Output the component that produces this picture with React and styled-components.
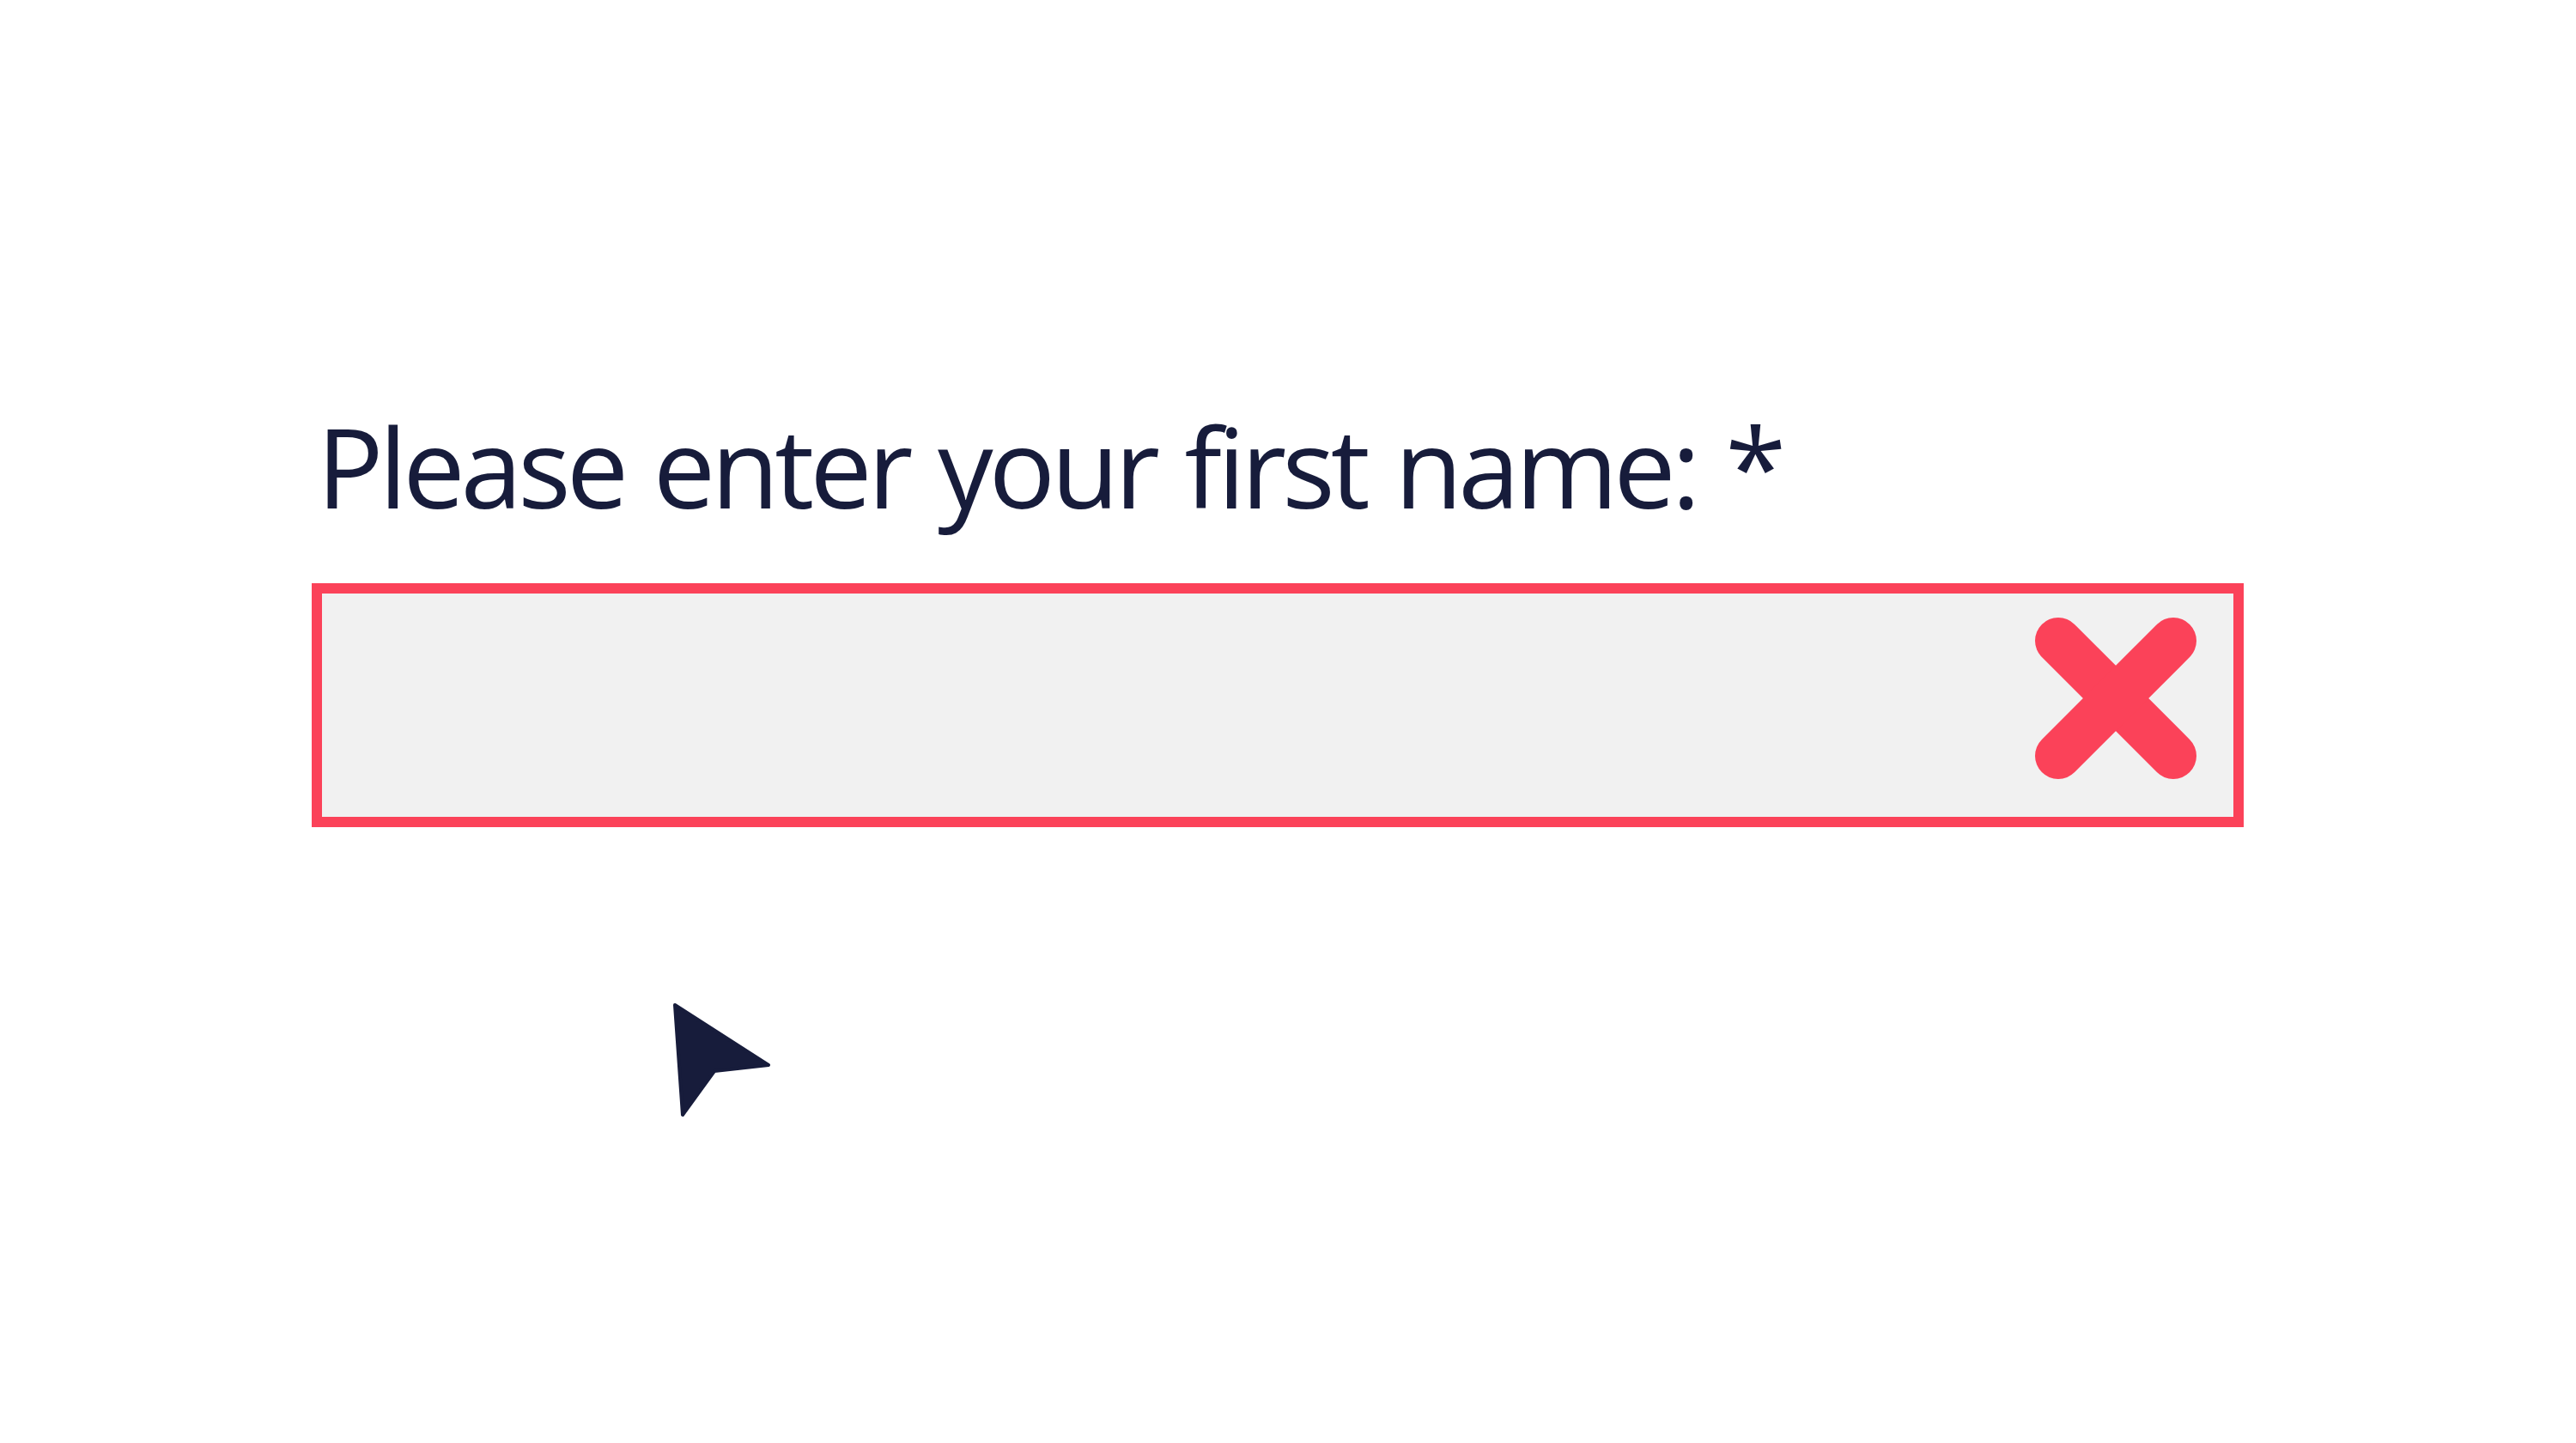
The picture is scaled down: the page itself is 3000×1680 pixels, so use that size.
import React from 'react';
import styled, { createGlobalStyle } from 'styled-components';

const GlobalStyle = createGlobalStyle`
  html, body {
    margin: 0;
    padding: 0;
    background: #ffffff;
  }
`;

const Page = styled.div`
  width: 3000px;
  height: 1680px;
  box-sizing: border-box;
  padding: 478px 0 0 363px;
  font-family: 'Open Sans', 'Noto Sans', sans-serif;
`;

const Label = styled.label`
  display: block;
  margin-left: 6px;
  font-size: 129px;
  line-height: 1;
  font-weight: 400;
  letter-spacing: -5px;
  word-spacing: 5px;
  color: #171c3b;
  white-space: nowrap;
`;

const Field = styled.div`
  margin-top: 72px;
  width: 2250px;
  height: 284px;
  box-sizing: border-box;
  border: 12px solid ${(p) => (p.$invalid ? '#fb4259' : '#c9c9c9')};
  background: #f1f1f1;
  display: flex;
  justify-content: flex-end;
  align-items: flex-start;
  padding: 28px 43px 0 0;
`;

const CursorWrap = styled.div`
  margin: 201px 0 0 417px;
  width: 120px;
  height: 140px;
`;

function ErrorIcon() {
  return (
    <svg width="188" height="188" viewBox="0 0 188 188">
      <g stroke="#fb4259" strokeWidth="54" strokeLinecap="round">
        <line x1="27" y1="27" x2="161" y2="161" />
        <line x1="161" y1="27" x2="27" y2="161" />
      </g>
    </svg>
  );
}

function Pointer() {
  return (
    <svg width="120" height="140" viewBox="0 0 120 140">
      <polygon
        points="6,6 115,76 52,83 15,134"
        fill="#171c3b"
        stroke="#171c3b"
        strokeWidth="4"
        strokeLinejoin="round"
      />
    </svg>
  );
}

export default function App() {
  return (
    <>
      <GlobalStyle />
      <Page>
        <Label htmlFor="first-name">Please enter your first name: *</Label>
        <Field $invalid id="first-name">
          <ErrorIcon />
        </Field>
        <CursorWrap>
          <Pointer />
        </CursorWrap>
      </Page>
    </>
  );
}
